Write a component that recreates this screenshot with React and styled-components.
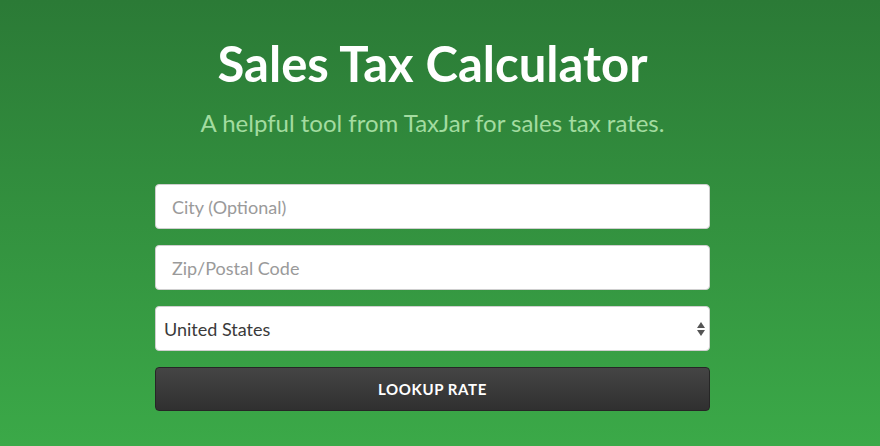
import React from 'react'
import styled, { createGlobalStyle } from 'styled-components'

const GlobalStyle = createGlobalStyle`
  html, body {
    margin: 0;
    padding: 0;
  }
  body {
    font-family: Lato, "Liberation Sans", sans-serif;
  }
`;

const Page = styled.div`
  min-height: 446px;
  box-sizing: border-box;
  padding: 34px 15px 0 0;
  background: linear-gradient(to bottom, #2b7a36 0%, #3ba948 100%);
  display: flex;
  flex-direction: column;
  align-items: center;
`;

const Title = styled.h1`
  margin: 0;
  font-size: 49px;
  font-weight: 700;
  line-height: 58px;
  color: #ffffff;
`;

const Subtitle = styled.p`
  margin: 17px 0 0;
  font-size: 24px;
  line-height: 28px;
  color: #a3dca0;
`;

const Form = styled.form`
  width: 555px;
  margin-top: 47px;
  display: flex;
  flex-direction: column;
  gap: 16px;
`;

const Input = styled.input`
  box-sizing: border-box;
  width: 100%;
  height: 45px;
  padding: 0 16px;
  border: 1px solid #cfcfcf;
  border-radius: 4px;
  background: #fff;
  font-family: Lato, "Liberation Sans", sans-serif;
  font-size: 18px;
  color: #333;
  outline: none;

  &::placeholder {
    color: #9a9a9a;
  }
`;

const SelectWrap = styled.div`
  position: relative;
  height: 45px;
`;

const Select = styled.select`
  box-sizing: border-box;
  width: 100%;
  height: 45px;
  padding: 0 30px 0 8px;
  border: 1px solid #cfcfcf;
  border-radius: 4px;
  background: #fff;
  font-family: Lato, "Liberation Sans", sans-serif;
  font-size: 18px;
  color: #3a3a3a;
  appearance: none;
  outline: none;
`;

const Arrows = styled.svg`
  position: absolute;
  right: 4px;
  top: 15px;
  pointer-events: none;
`;

const Button = styled.button`
  box-sizing: border-box;
  width: 100%;
  height: 44px;
  border: 1px solid #262626;
  border-radius: 4px;
  background: linear-gradient(to bottom, #454545 0%, #303030 100%);
  color: #fff;
  font-family: Lato, "Liberation Sans", sans-serif;
  font-size: 15px;
  font-weight: 700;
  letter-spacing: 0.6px;
  text-transform: uppercase;
  cursor: pointer;
`;

export default function App() {
  return (
    <>
      <GlobalStyle />
      <Page>
        <Title>Sales Tax Calculator</Title>
        <Subtitle>A helpful tool from TaxJar for sales tax rates.</Subtitle>
        <Form onSubmit={(e) => e.preventDefault()}>
          <Input placeholder="City (Optional)" />
          <Input placeholder="Zip/Postal Code" />
          <SelectWrap>
            <Select defaultValue="US">
              <option value="US">United States</option>
              <option value="CA">Canada</option>
            </Select>
            <Arrows width="10" height="16" viewBox="0 0 10 16">
              <path d="M5 1 L9 7 L1 7 Z" fill="#555" />
              <path d="M1 9 L9 9 L5 15 Z" fill="#555" />
            </Arrows>
          </SelectWrap>
          <Button type="submit">Lookup Rate</Button>
        </Form>
      </Page>
    </>
  )
}
